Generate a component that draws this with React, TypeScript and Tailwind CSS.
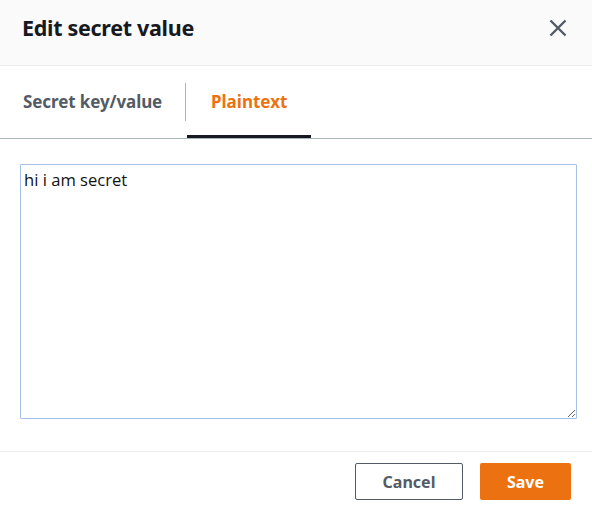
import { useState } from "react";

const font = { fontFamily: '"Noto Sans", "Open Sans", sans-serif' };

const App = () => {
  const [value, setValue] = useState("hi i am secret");

  return (
    <div className="w-[592px] h-[508px] bg-white flex flex-col" style={font}>
      {/* Header */}
      <div className="h-[66px] shrink-0 bg-[#fafafa] border-b border-[#eaeded] flex items-start justify-between pt-[13px] pl-[22px] pr-[24px]">
        <h2 className="text-[21.5px] leading-[30px] font-bold text-[#16191f] tracking-[-0.3px]">Edit secret value</h2>
        <button aria-label="Close" className="w-5 h-5 mt-[5px] flex items-center justify-center text-[#545b64]">
          <svg width="18" height="18" viewBox="0 0 18 18" fill="none" stroke="currentColor" strokeWidth="2.4">
            <path d="M1.5 1.5 L16.5 16.5 M16.5 1.5 L1.5 16.5" />
          </svg>
        </button>
      </div>

      {/* Tabs */}
      <div className="h-[73px] shrink-0 flex items-stretch border-b border-[#aab7b8]">
        <button className="pl-[23px] pr-[23px] text-[17px] font-bold text-[#545b64] tracking-[-0.1px]">
          Secret key/value
        </button>
        <div className="flex items-center">
          <div className="w-px h-[38px] bg-[#aab7b8]" />
        </div>
        <button className="relative w-[124px] ml-[1px] text-[17px] font-bold text-[#ec7211]">
          Plaintext
          <span className="absolute left-0 right-0 bottom-0 h-[3px] bg-[#16191f]" />
        </button>
      </div>

      {/* Body */}
      <div className="flex-1 pl-[20px] pr-[15px] pt-[25px] pb-[32px] flex border-b border-[#eaeded]">
        <textarea
          value={value}
          onChange={(e) => setValue(e.target.value)}
          className="flex-1 border border-[#a4bfe9] rounded-[1px] px-[3px] py-[4px] text-[16.6px] leading-[21px] text-[#111] outline-none"
          style={{ fontFamily: '"Open Sans", sans-serif' }}
        />
      </div>

      {/* Footer */}
      <div className="h-[56px] shrink-0 flex items-start justify-end gap-[17px] pt-[11px] pr-[21px]">
        <button className="w-[108px] h-[37px] border border-[#545b64] rounded-[2px] text-[16px] font-bold text-[#545b64]">
          Cancel
        </button>
        <button className="w-[91px] h-[37px] bg-[#ec7211] rounded-[2px] text-[16px] font-bold text-white">
          Save
        </button>
      </div>
    </div>
  );
};

export default App;
